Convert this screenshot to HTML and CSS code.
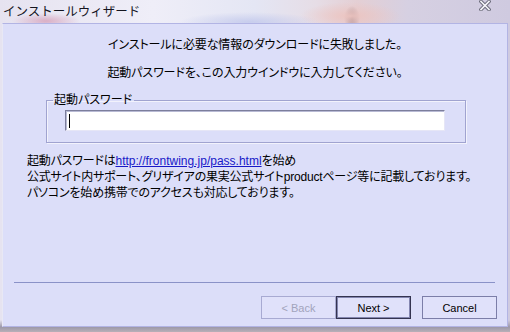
FILE: index.html
```html
<!DOCTYPE html>
<html>
<head>
  <title>インストールウィザード</title>
  <meta charset="utf-8">
  <link rel="stylesheet" href="styles.css">
</head>
<body>
  <div class="window">
    <div class="titlebar">
      <span class="title">インストールウィザード</span>
      <svg class="close" width="12" height="11" viewBox="0 0 12 11">
        <path d="M2 1.5 L10 9.5 M10 1.5 L2 9.5" stroke="#6c6c7c" stroke-width="3.6" stroke-linecap="square"/>
        <path d="M2 1.5 L10 9.5 M10 1.5 L2 9.5" stroke="#f6f6fa" stroke-width="1.6" stroke-linecap="square"/>
      </svg>
    </div>

    <div class="panel">
      <p class="msg first">インストールに必要な情報のダウンロードに失敗しました。</p>
      <p class="msg">起動パスワードを、この入力ウインドウに入力してください。</p>

      <fieldset class="group">
        <legend>起動パスワード</legend>
        <div class="field"><span class="caret"></span></div>
      </fieldset>

      <p class="info">起動パスワードは<a href="#">http://frontwing.jp/pass.html</a>を始め<br>公式サイト内サポート、グリザイアの果実公式サイトproductページ等に記載しております。<br>パソコンを始め携帯でのアクセスも対応しております。</p>

      <div class="footer">
        <hr class="sep">
        <div class="buttons">
          <button class="btn back" disabled>&lt; Back</button>
          <button class="btn next">Next &gt;</button>
          <button class="btn cancel">Cancel</button>
        </div>
      </div>
    </div>
  </div>
</body>
</html>
```

FILE: styles.css
```css
body {
  margin: 0;
  font-family: "Noto Sans CJK JP", sans-serif;
  font-size: 12px;
  color: #000;
}

.window {
  width: 510px;
  height: 332px;
  overflow: hidden;
  background:
    radial-gradient(ellipse 34px 8px at 46px 21px, rgba(214, 160, 186, 0.8), transparent),
    radial-gradient(ellipse 50px 14px at 350px 16px, rgba(236, 196, 192, 0.95), transparent),
    radial-gradient(ellipse 8px 12px at 352px 18px, rgba(110, 80, 86, 0.7), transparent),
    radial-gradient(ellipse 70px 10px at 250px 22px, rgba(196, 202, 236, 0.9), transparent),
    linear-gradient(to bottom, transparent 320px, #9c98a8 327px, #b8b0b8 332px),
    linear-gradient(to right, #e6e3f0 0%, #efeef8 30%, #e4e6f4 50%, #e6dde6 62%, #e4cfd4 70%, #d6d0e2 80%, #cfcae0 100%);
}

.titlebar {
  height: 23px;
  display: flex;
  align-items: center;
  justify-content: space-between;
  padding: 0 19px 0 3px;
}

.title {
  font-size: 12.5px;
  line-height: 16px;
  color: #14141e;
  margin-top: -2px;
}

.close {
  align-self: flex-start;
  margin-top: 0;
}

.panel {
  margin: 0 2px;
  height: 304px;
  box-sizing: border-box;
  border: 1px solid #b2b4e4;
  border-left-color: #e8e8f4;
  background-color: #dcdef9;
  display: flex;
  flex-direction: column;
  font-family: "Liberation Sans", "Noto Sans CJK JP", sans-serif;
  font-feature-settings: "palt";
}

.msg {
  margin: 12px 0 0;
  text-align: center;
  line-height: 16px;
  letter-spacing: -0.1px;
}

.msg.first {
  margin-top: 13px;
}

.group {
  margin: 11px 0 0 43px;
  width: 420px;
  box-sizing: border-box;
  padding: 0 6px 11px;
  border: 1px solid #a0a3d0;
  box-shadow: inset 1px 1px 0 #f2f2fc, 1px 1px 0 #f2f2fc;
}

.group legend {
  padding: 0 2px 0 1px;
  line-height: 16px;
}

.field {
  margin: 2px 0 0 12px;
  width: 380px;
  height: 21px;
  box-sizing: border-box;
  background-color: #fff;
  border: 1px solid;
  border-color: #7c7e9c #e6e6f6 #e6e6f6 #7c7e9c;
  box-shadow: inset 1px 1px 0 #b8bad4;
}

.caret {
  display: block;
  width: 1px;
  height: 14px;
  margin: 3px 0 0 3px;
  background-color: #000;
}

.info {
  margin: 10px 0 0 24px;
  line-height: 16px;
  letter-spacing: -0.2px;
}

.info a {
  color: #1818c8;
  text-decoration: underline;
  letter-spacing: 0;
}

.footer {
  margin-top: auto;
  padding-bottom: 7px;
}

.sep {
  margin: 0 12px 0 11px;
  height: 0;
  border: 0;
  border-top: 1px solid #8a92c8;
}

.buttons {
  display: flex;
  justify-content: flex-end;
  margin-top: 13px;
  padding-right: 10px;
}

.btn {
  width: 75px;
  height: 23px;
  padding: 0;
  font-family: "Liberation Sans", sans-serif;
  font-size: 11px;
  color: #000;
  background-color: #e0e1fa;
  border: 1px solid #7c7ea8;
  border-radius: 0;
}

.btn.back {
  color: #a2a4bc;
  border-color: #a8aad2;
}

.btn.next {
  border-color: #343450;
  box-shadow: inset 0 0 0 1px #8486b0;
}

.btn.cancel {
  margin-left: 11px;
}
```
